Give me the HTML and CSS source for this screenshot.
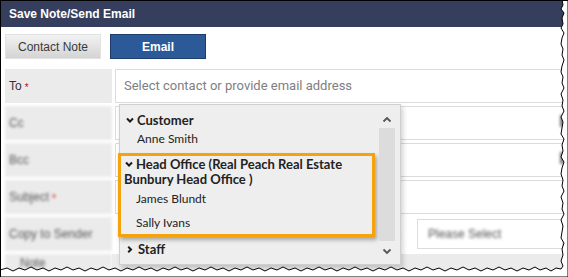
FILE: index.html
```html
<!DOCTYPE html>
<html lang="en">
<head>
    <meta charset="UTF-8">
    <meta name="viewport" content="width=device-width, initial-scale=1.0">
    <title>Save Note/Send Email</title>
    <link rel="stylesheet" href="styles.css">
</head>
<body>
    <div class="frame">
        <div class="title-bar">Save Note/Send Email</div>
        <div class="tabs">
            <button class="tab">Contact Note</button>
            <button class="tab active">Email</button>
        </div>
        <div class="form">
            <div class="label">To <span class="req">*</span></div>
            <div class="field"><div class="input placeholder">Select contact or provide email address</div></div>

            <div class="label soft">Cc</div>
            <div class="field soft-box"><div class="input"><span class="blob"></span></div></div>

            <div class="label soft">Bcc</div>
            <div class="field soft-box"><div class="input"><span class="blob"></span></div></div>

            <div class="label soft">Subject <span class="req">*</span></div>
            <div class="field soft-box"><div class="input"></div></div>

            <div class="label soft">Copy to Sender</div>
            <div class="field plain">
                <span class="type-label soft">Template</span>
                <div class="select soft-box"><span class="soft">Please Select</span></div>
            </div>

            <div class="label soft note">Note</div>
            <div class="field note-fill"></div>
        </div>

        <!-- contact picker, open over the form -->
        <div class="dropdown">
            <div class="list">
                <div class="group-head">
                    <svg class="chev" viewBox="0 0 10 8"><path d="M1.3 1.6 L5 5.4 L8.7 1.6"/></svg>Customer
                </div>
                <div class="item first">Anne Smith</div>

                <div class="group highlight">
                    <div class="group-head wrap">
                        <svg class="chev" viewBox="0 0 10 8"><path d="M1.3 1.6 L5 5.4 L8.7 1.6"/></svg>Head Office (Real Peach Real Estate Bunbury Head Office )
                    </div>
                    <div class="item">James Blundt</div>
                    <div class="item">Sally Ivans</div>
                </div>

                <div class="group-head staff">
                    <svg class="chev right" viewBox="0 0 8 10"><path d="M1.6 1.3 L5.4 5 L1.6 8.7"/></svg>Staff
                </div>
            </div>
            <div class="scroll">
                <svg class="arrow" viewBox="0 0 10 7"><path d="M1.5 5.5 L5 2 L8.5 5.5"/></svg>
                <div class="track"></div>
                <svg class="arrow" viewBox="0 0 10 7"><path d="M1.5 1.5 L5 5 L8.5 1.5"/></svg>
            </div>
        </div>

        <!-- torn paper edge of the screenshot -->
        <svg class="torn" viewBox="0 0 568 277">
            <path class="paper" d="M568 0 L562 0 L563 5 L561 9 L564 13 L562 18 L563 24 L561 28 L564 33 L562 38 L561 44 L563 49 L562 55 L564 60 L562 66 L561 72 L563 77 L562 83 L564 88 L561 94 L563 100 L562 106 L564 111 L561 117 L563 122 L562 128 L561 134 L564 139 L562 145 L563 151 L561 157 L564 162 L562 168 L561 174 L563 180 L562 186 L564 191 L561 197 L563 203 L562 209 L564 214 L561 220 L563 226 L562 232 L561 238 L564 243 L562 249 L563 255 L561 261 L563 266 L561 269 L556 268 L551 271 L546 268 L540 270 L535 267 L529 270 L523 268 L517 271 L511 268 L505 270 L499 267 L493 270 L487 268 L481 271 L475 268 L469 270 L463 267 L457 270 L451 268 L445 271 L439 268 L433 270 L427 267 L421 270 L415 268 L409 271 L403 268 L397 270 L391 267 L385 270 L379 268 L373 271 L367 268 L361 270 L355 267 L349 270 L343 268 L337 271 L331 268 L325 270 L319 267 L313 270 L307 268 L301 271 L295 268 L289 270 L283 267 L277 270 L271 268 L265 271 L259 268 L253 270 L247 267 L241 270 L235 268 L229 271 L223 268 L217 270 L211 267 L205 270 L199 268 L193 271 L187 268 L181 270 L175 267 L169 270 L163 268 L157 271 L151 268 L145 270 L139 267 L133 270 L127 268 L121 271 L115 268 L109 270 L103 267 L97 270 L91 268 L85 271 L79 268 L73 270 L67 267 L61 270 L55 268 L49 271 L43 268 L37 270 L31 267 L25 270 L19 268 L13 271 L7 268 L0 270 L0 277 L568 277 Z"/>
        </svg>
    </div>
</body>
</html>
```
FILE: styles.css
```css
* {
    margin: 0;
    padding: 0;
    box-sizing: border-box;
}
body {
    background: white;
    font-family: "Liberation Sans", Arial, sans-serif;
}
.frame {
    position: relative;
    width: 568px;
    height: 277px;
    overflow: hidden;
    border-left: 1px solid #000;
    border-top: 1px solid #000;
    background: white;
}
.title-bar {
    height: 26px;
    background: #353e5c;
    color: white;
    font-size: 12px;
    font-weight: bold;
    line-height: 26px;
    padding-left: 8px;
}
.tabs {
    display: flex;
    gap: 9px;
    padding: 7px 0 0 4px;
}
.tab {
    width: 96px;
    height: 25px;
    font-family: "Liberation Sans", Arial, sans-serif;
    font-size: 12px;
    color: #3a3a3a;
    border: 1px solid #e2e2e2;
    background: linear-gradient(#f2f2f2, #d4d4d4);
}
.tab.active {
    background: #2c5a98;
    border-color: #1d3c6c;
    color: white;
    font-weight: bold;
}
.form {
    display: grid;
    grid-template-columns: 107px 1fr;
    grid-auto-rows: 34px;
    gap: 3px 3px;
    padding: 10px 0 0 4px;
}
.label {
    background: #ebebeb;
    font-size: 12px;
    color: #333;
    display: flex;
    align-items: center;
    padding-left: 4px;
}
.req {
    color: #d40000;
    font-size: 10px;
    margin-left: 3px;
    margin-top: 2px;
}
.soft {
    filter: blur(1.4px);
    color: #555;
}
.soft-box {
    filter: blur(0.6px);
}
.field {
    display: flex;
}
.input {
    position: relative;
    flex: 1;
    border: 1px solid #dcdcdc;
    background: white;
}
.placeholder {
    font-family: Roboto, sans-serif;
    font-size: 13px;
    color: #808080;
    line-height: 32px;
    padding-left: 8px;
}
.blob {
    position: absolute;
    right: 3px;
    top: 8px;
    width: 4px;
    height: 12px;
    background: #777;
    filter: blur(1.5px);
}
.field.plain {
    align-items: center;
    justify-content: flex-end;
    gap: 14px;
    padding-right: 5px;
}
.type-label {
    font-size: 12px;
    margin-right: 3px;
}
.select {
    width: 146px;
    height: 30px;
    border: 1px solid #dcdcdc;
    font-size: 12px;
    display: flex;
    align-items: center;
    padding-left: 10px;
}
.note {
    align-items: flex-start;
    padding-top: 2px;
    padding-left: 15px;
}
.note-fill {
    background: #ebebeb;
    margin-left: -3px;
}

/* dropdown */
.dropdown {
    position: absolute;
    left: 118px;
    top: 103px;
    width: 282px;
    height: 161px;
    display: flex;
    background: #eeeeee;
    border: 1px solid #cfcfcf;
    box-shadow: 2px 3px 5px rgba(0, 0, 0, 0.18);
    font-family: Lato, sans-serif;
    color: #222;
}
.list {
    width: 259px;
    padding-top: 5px;
}
.group-head {
    font-size: 13px;
    font-weight: bold;
    height: 20px;
    line-height: 20px;
    padding-left: 6px;
    display: flex;
    align-items: center;
}
.group-head.wrap {
    display: block;
    height: auto;
    line-height: 15px;
    padding: 1px 0 0 3px;
}
.chev {
    width: 8px;
    height: 7px;
    margin-right: 3px;
    fill: none;
    stroke: #1a1a1a;
    stroke-width: 2.6;
}
.wrap .chev {
    margin-left: 1px;
    vertical-align: 1px;
}
.chev.right {
    width: 6px;
    height: 9px;
    margin-right: 5px;
}
.item {
    font-size: 12px;
    height: 24px;
    line-height: 24px;
    padding-left: 15px;
}
.item.first {
    height: 18px;
    line-height: 18px;
    margin-bottom: 5px;
    padding-left: 17px;
}
.highlight {
    margin-left: -2px;
    width: 257px;
    height: 84px;
    border: 3px solid #f5a30c;
    box-shadow: 2px 3px 4px rgba(0, 0, 0, 0.3);
}
.highlight .item {
    height: 23px;
    line-height: 24px;
}
.highlight .item:nth-child(2) {
    height: 24px;
    line-height: 20px;
    padding-top: 2px;
}
.staff {
    height: 24px;
    padding-left: 7px;
}
.scroll {
    width: 16px;
    display: flex;
    flex-direction: column;
    align-items: center;
    padding-top: 11px;
}
.arrow {
    width: 10px;
    height: 7px;
    fill: none;
    stroke: #555;
    stroke-width: 1.8;
}
.track {
    width: 16px;
    height: 113px;
    margin: 5px 0 7px;
    background: #dcdcdc;
}

.torn {
    position: absolute;
    left: -1px;
    top: -1px;
    width: 568px;
    height: 277px;
    pointer-events: none;
}
.paper {
    fill: white;
    stroke: #000;
    stroke-width: 1;
}
```
